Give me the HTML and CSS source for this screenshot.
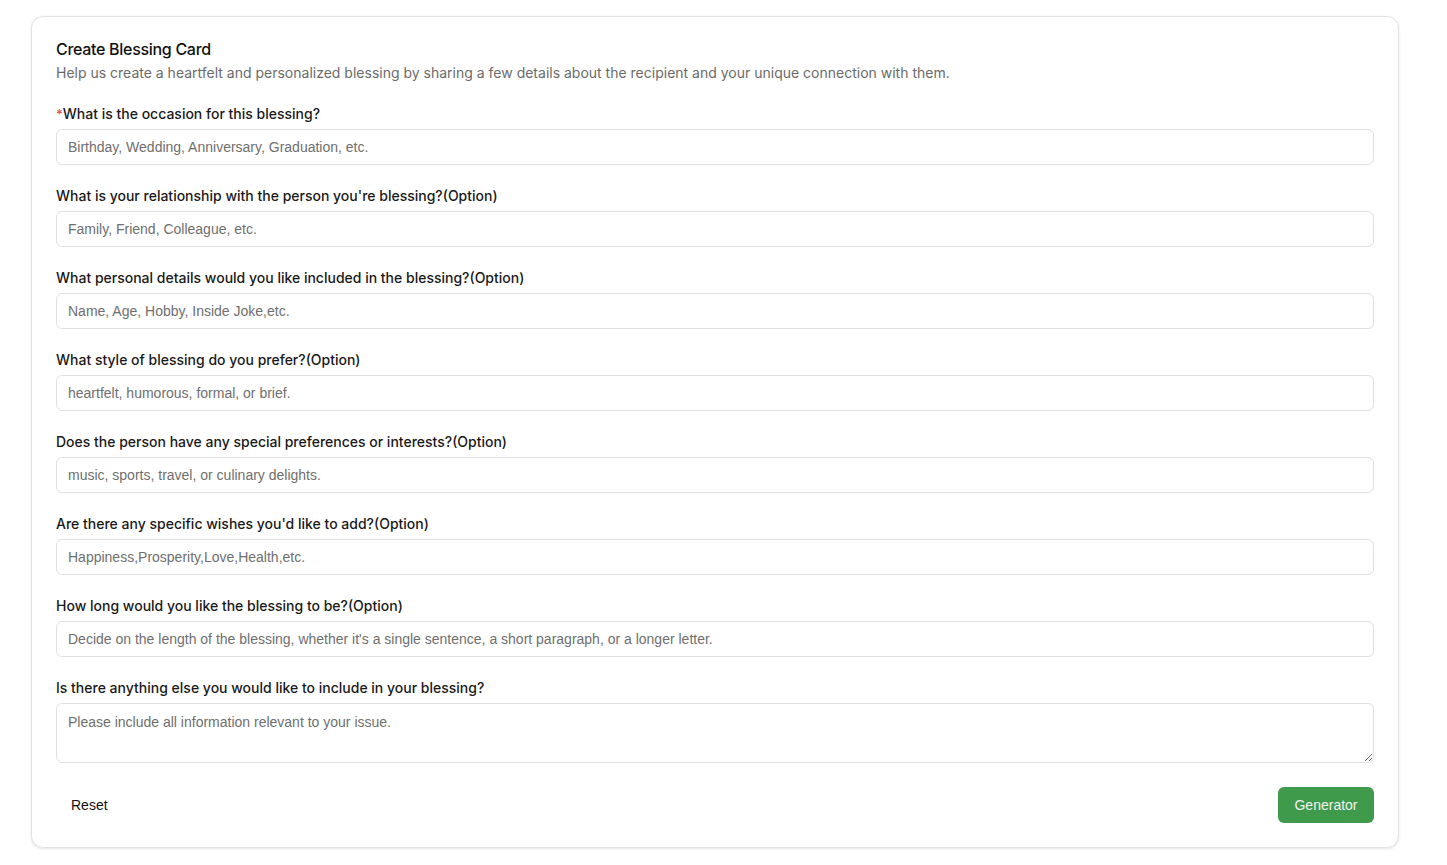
FILE: index.html
```html
<!DOCTYPE html>
<html lang="en">
<head>
<meta charset="utf-8">
<title>Create Blessing Card</title>
<link rel="stylesheet" href="styles.css">
</head>
<body>
<div class="page">
  <form class="card">
    <h1 class="title">Create Blessing Card</h1>
    <p class="subtitle">Help us create a heartfelt and personalized blessing by sharing a few details about the recipient and your unique connection with them.</p>

    <div class="field">
      <label class="label"><span class="req">*</span>What is the occasion for this blessing?</label>
      <input class="input" type="text" placeholder="Birthday, Wedding, Anniversary, Graduation, etc.">
    </div>
    <div class="field">
      <label class="label">What is your relationship with the person you're blessing?(Option)</label>
      <input class="input" type="text" placeholder="Family, Friend, Colleague, etc.">
    </div>
    <div class="field">
      <label class="label">What personal details would you like included in the blessing?(Option)</label>
      <input class="input" type="text" placeholder="Name, Age, Hobby, Inside Joke,etc.">
    </div>
    <div class="field">
      <label class="label">What style of blessing do you prefer?(Option)</label>
      <input class="input" type="text" placeholder="heartfelt, humorous, formal, or brief.">
    </div>
    <div class="field">
      <label class="label">Does the person have any special preferences or interests?(Option)</label>
      <input class="input" type="text" placeholder="music, sports, travel, or culinary delights.">
    </div>
    <div class="field">
      <label class="label">Are there any specific wishes you'd like to add?(Option)</label>
      <input class="input" type="text" placeholder="Happiness,Prosperity,Love,Health,etc.">
    </div>
    <div class="field">
      <label class="label">How long would you like the blessing to be?(Option)</label>
      <input class="input" type="text" placeholder="Decide on the length of the blessing, whether it's a single sentence, a short paragraph, or a longer letter.">
    </div>
    <div class="field last">
      <label class="label">Is there anything else you would like to include in your blessing?</label>
      <textarea class="textarea" placeholder="Please include all information relevant to your issue."></textarea>
    </div>

    <div class="actions">
      <button type="button" class="btn btn-ghost">Reset</button>
      <button type="button" class="btn btn-primary">Generator</button>
    </div>
  </form>
</div>
</body>
</html>
```

FILE: styles.css
```css
* { box-sizing: border-box; }

html, body {
  margin: 0;
  padding: 0;
  background: #ffffff;
}

body {
  font-family: Inter, "Liberation Sans", Arial, sans-serif;
  color: #1a1a1a;
}

.page {
  padding: 16px 48px 16px 31px;
}

.card {
  display: flex;
  flex-direction: column;
  border: 1px solid #e3e3e3;
  border-radius: 12px;
  box-shadow: 0 1px 3px rgba(0, 0, 0, 0.10);
  padding: 20px 24px 24px 24px;
  background: #fff;
}

.title {
  margin: 0;
  font-size: 16px;
  line-height: 24px;
  font-weight: 500;
  letter-spacing: -0.3px;
  color: #111;
}

.subtitle {
  margin: 2px 0 21px 0;
  font-size: 14px;
  line-height: 20px;
  color: #6b6b6b;
}

.field {
  display: flex;
  flex-direction: column;
  margin-bottom: 21px;
}

.field.last {
  margin-bottom: 24px;
}

.label {
  font-size: 14px;
  line-height: 20px;
  font-weight: 500;
  color: #1a1a1a;
  margin-bottom: 5px;
}

.req {
  color: #e5484d;
  font-size: 13px;
}

.input,
.textarea {
  width: 100%;
  border: 1px solid #e0e0e0;
  border-radius: 6px;
  background: #fff;
  font-family: "Liberation Sans", Arial, sans-serif;
  font-size: 14px;
  color: #222;
  padding: 0 11px;
  outline: none;
}

.input {
  height: 36px;
}

.textarea {
  height: 60px;
  padding: 8px 11px;
  line-height: 20px;
  resize: vertical;
  display: block;
}

.input::placeholder,
.textarea::placeholder {
  color: #6f6f6f;
}

.actions {
  display: flex;
  justify-content: space-between;
  align-items: center;
}

.btn {
  height: 36px;
  border-radius: 6px;
  font-family: "Liberation Sans", Arial, sans-serif;
  font-size: 14px;
  padding: 0 15px;
  border: none;
  cursor: pointer;
}

.btn-ghost {
  background: transparent;
  color: #111;
}

.btn-primary {
  background: #3f9a4c;
  color: #f2f2f2;
  width: 96px;
}
```
